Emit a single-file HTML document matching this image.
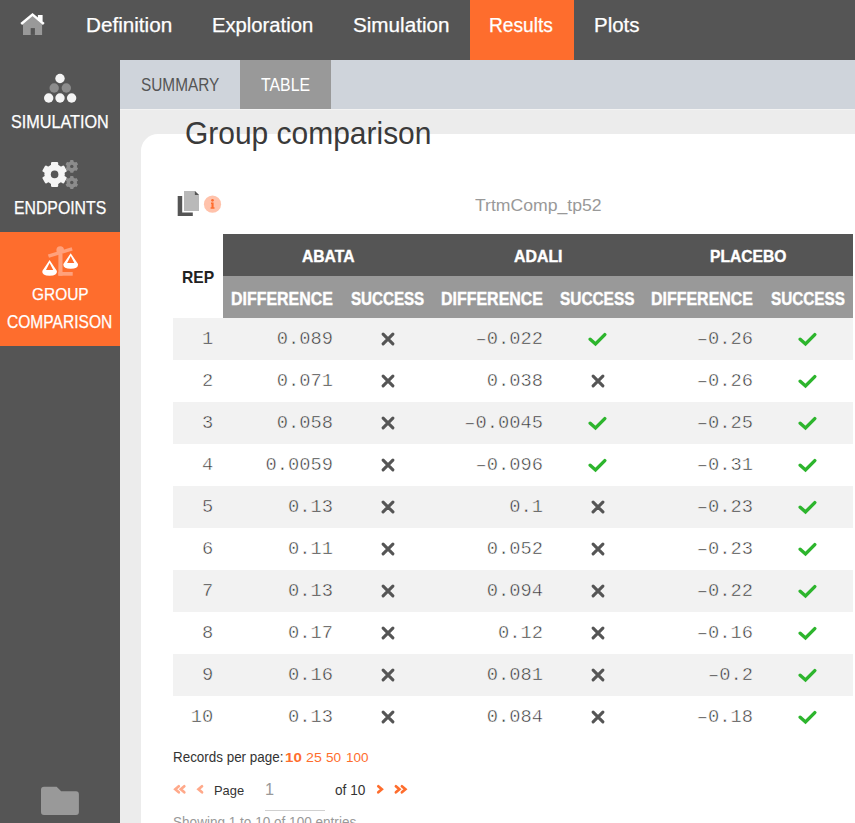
<!DOCTYPE html>
<html><head><meta charset="utf-8">
<style>
*{box-sizing:border-box;margin:0;padding:0}
html,body{width:855px;height:823px;overflow:hidden;background:#ececec;font-family:"Liberation Sans",sans-serif;color:#333;position:relative}
.bg{position:absolute}
.t{position:absolute;white-space:nowrap;line-height:1;transform-origin:0 0;font-family:"Liberation Sans",sans-serif}
.n{position:absolute;white-space:nowrap;line-height:1;text-align:right;font-family:"Liberation Mono",monospace;font-size:18.75px;color:#333;transform:scaleY(0.9313);transform-origin:0 77%}
.ic{position:absolute;display:block}
</style></head><body>
<div class="bg" style="left:0;top:0;width:855px;height:60px;background:#555"></div>
<div class="bg" style="left:470px;top:0;width:104px;height:60px;background:#fe6d2d"></div>
<div class="bg" style="left:0;top:60px;width:120px;height:763px;background:#555"></div>
<div class="bg" style="left:0;top:232px;width:120px;height:114px;background:#fe6d2d"></div>
<div class="bg" style="left:120px;top:60px;width:735px;height:49px;background:#cfd4db"></div>
<div class="bg" style="left:240px;top:60px;width:91px;height:49px;background:#999"></div>
<div class="bg" style="left:120px;top:109px;width:735px;height:1px;background:#f3f3f3"></div>
<div class="bg" style="left:141px;top:134px;width:760px;height:760px;background:#fff;border-radius:17px"></div>
<div class="bg" style="left:223px;top:234px;width:630px;height:42px;background:#555"></div>
<div class="bg" style="left:223px;top:276px;width:630px;height:42px;background:#999"></div>
<div class="bg" style="left:265px;top:810px;width:60px;height:1px;background:#d0d0d0"></div>

<!-- home -->
<svg class="ic" style="left:15px;top:8px" width="40" height="32" viewBox="15 8 40 32">
  <path d="M23 24 L32.5 16 L42.1 24 V34.9 H23 Z" fill="#999"/>
  <rect x="30.7" y="28.1" width="4.2" height="6.8" fill="#555"/>
  <rect x="37.9" y="15" width="4.7" height="6" fill="#fff"/>
  <path d="M21.2 24 L32.5 14.6 L43.8 24" fill="none" stroke="#fff" stroke-width="2.6" stroke-linecap="butt"/>
</svg>
<!-- simulation dots -->
<svg class="ic" style="left:35px;top:65px" width="50" height="40" viewBox="35 65 50 40">
  <circle cx="60" cy="78.5" r="4.7" fill="#f4f4f4"/>
  <circle cx="54.2" cy="88" r="4.7" fill="#8c8c8c"/>
  <circle cx="66.3" cy="88" r="4.7" fill="#8c8c8c"/>
  <circle cx="48.7" cy="98" r="4.7" fill="#f4f4f4"/>
  <circle cx="60" cy="98" r="4.7" fill="#f4f4f4"/>
  <circle cx="71.6" cy="98" r="4.7" fill="#f4f4f4"/>
</svg>
<!-- gears -->
<svg class="ic" style="left:35px;top:150px" width="50" height="45" viewBox="35 150 50 45">
  <circle cx="54.6" cy="174.4" r="10.2" fill="#f4f4f4"/>
  <rect x="51.00" y="161.90" width="7.20" height="12.50" rx="1.2" fill="#f4f4f4" transform="rotate(0.0 54.6 174.4)"/>
  <rect x="51.00" y="161.90" width="7.20" height="12.50" rx="1.2" fill="#f4f4f4" transform="rotate(60.0 54.6 174.4)"/>
  <rect x="51.00" y="161.90" width="7.20" height="12.50" rx="1.2" fill="#f4f4f4" transform="rotate(120.0 54.6 174.4)"/>
  <rect x="51.00" y="161.90" width="7.20" height="12.50" rx="1.2" fill="#f4f4f4" transform="rotate(180.0 54.6 174.4)"/>
  <rect x="51.00" y="161.90" width="7.20" height="12.50" rx="1.2" fill="#f4f4f4" transform="rotate(240.0 54.6 174.4)"/>
  <rect x="51.00" y="161.90" width="7.20" height="12.50" rx="1.2" fill="#f4f4f4" transform="rotate(300.0 54.6 174.4)"/>
  <circle cx="54.6" cy="174.4" r="3.8" fill="#555"/>
  <circle cx="71.8" cy="166.4" r="5.2" fill="#8c8c8c"/>
  <rect x="70.10" y="160.00" width="3.40" height="6.40" rx="0.7" fill="#8c8c8c" transform="rotate(0.0 71.8 166.4)"/>
  <rect x="70.10" y="160.00" width="3.40" height="6.40" rx="0.7" fill="#8c8c8c" transform="rotate(60.0 71.8 166.4)"/>
  <rect x="70.10" y="160.00" width="3.40" height="6.40" rx="0.7" fill="#8c8c8c" transform="rotate(120.0 71.8 166.4)"/>
  <rect x="70.10" y="160.00" width="3.40" height="6.40" rx="0.7" fill="#8c8c8c" transform="rotate(180.0 71.8 166.4)"/>
  <rect x="70.10" y="160.00" width="3.40" height="6.40" rx="0.7" fill="#8c8c8c" transform="rotate(240.0 71.8 166.4)"/>
  <rect x="70.10" y="160.00" width="3.40" height="6.40" rx="0.7" fill="#8c8c8c" transform="rotate(300.0 71.8 166.4)"/>
  <circle cx="71.8" cy="166.4" r="1.7" fill="#555"/>
  <circle cx="71.8" cy="182.5" r="5.2" fill="#8c8c8c"/>
  <rect x="70.10" y="176.10" width="3.40" height="6.40" rx="0.7" fill="#8c8c8c" transform="rotate(0.0 71.8 182.5)"/>
  <rect x="70.10" y="176.10" width="3.40" height="6.40" rx="0.7" fill="#8c8c8c" transform="rotate(60.0 71.8 182.5)"/>
  <rect x="70.10" y="176.10" width="3.40" height="6.40" rx="0.7" fill="#8c8c8c" transform="rotate(120.0 71.8 182.5)"/>
  <rect x="70.10" y="176.10" width="3.40" height="6.40" rx="0.7" fill="#8c8c8c" transform="rotate(180.0 71.8 182.5)"/>
  <rect x="70.10" y="176.10" width="3.40" height="6.40" rx="0.7" fill="#8c8c8c" transform="rotate(240.0 71.8 182.5)"/>
  <rect x="70.10" y="176.10" width="3.40" height="6.40" rx="0.7" fill="#8c8c8c" transform="rotate(300.0 71.8 182.5)"/>
  <circle cx="71.8" cy="182.5" r="1.7" fill="#555"/>
</svg>
<!-- scales -->
<svg class="ic" style="left:35px;top:240px" width="50" height="45" viewBox="35 240 50 45">
  <g fill="#ffa17c">
    <path d="M47.9 254.6 L71.6 247.3 L72.7 250.5 L49 257.8 Z"/>
    <circle cx="60.2" cy="250" r="3.8"/>
    <rect x="58.4" y="254" width="4.1" height="21.7"/>
    <rect x="58.4" y="272" width="14.3" height="3.7"/>
  </g>
  <g fill="#fff">
    <path fill-rule="evenodd" d="M49.6 260 L56.9 271 Q57.5 275.7 49.6 275.7 Q41.7 275.7 42.3 271 Z M49.6 262.9 L46 270 H53.2 Z"/>
    <path fill-rule="evenodd" d="M70.7 253.2 L78 264 Q78.6 268.7 70.7 268.7 Q62.8 268.7 63.4 264 Z M70.7 256.1 L67.1 263 H74.3 Z"/>
  </g>
</svg>
<!-- folder -->
<svg class="ic" style="left:35px;top:780px" width="50" height="40" viewBox="35 780 50 40">
  <path d="M44 786.8 H56.6 L61.2 791.3 H76 Q78.9 791.3 78.9 794.3 V812 Q78.9 815 76 815 H44 Q41 815 41 812 V789.8 Q41 786.8 44 786.8 Z" fill="#999"/>
</svg>
<!-- copy + info -->
<svg class="ic" style="left:170px;top:185px" width="60" height="35" viewBox="170 185 60 35">
  <path d="M177.7 196 H182.2 V212.5 H192.8 V216 H177.7 Z" fill="#555"/>
  <path d="M183.5 190.5 H194.5 L199.3 195.3 V211.3 H183.5 Z" fill="#fff"/>
  <path d="M184 190.9 H195 L199 194.9 V211 H184 Z" fill="#b9b9b9"/>
  <path d="M194.9 190.9 L199 195 H194.9 Z" fill="#555"/>
  <circle cx="212.5" cy="204.2" r="8.6" fill="#ffc2ab"/>
  <circle cx="212.5" cy="200.3" r="1.35" fill="#ff6d2e"/>
  <path d="M211 202.4 H213.6 V207.2 H214.5 V208.7 H210.6 V207.2 H211.5 V203.9 H211 Z" fill="#ff6d2e"/>
</svg>
<!-- pagination chevrons -->
<svg class="ic" style="left:170px;top:780px" width="240" height="20" viewBox="170 780 240 20">
  <g fill="none" stroke="#ffa98a" stroke-width="2.7" stroke-linecap="round" stroke-linejoin="miter">
    <path d="M178.8 786.3 L175.3 789.3 L178.8 792.3"/>
    <path d="M184.3 786.3 L180.8 789.3 L184.3 792.3"/>
    <path d="M202 786.3 L198.5 789.3 L202 792.3"/>
  </g>
  <g fill="none" stroke="#fe6d2d" stroke-width="2.7" stroke-linecap="round" stroke-linejoin="miter">
    <path d="M378.3 786.3 L381.8 789.3 L378.3 792.3"/>
    <path d="M395.9 786.3 L399.4 789.3 L395.9 792.3"/>
    <path d="M401.9 786.3 L405.4 789.3 L401.9 792.3"/>
  </g>
</svg>
<div class="bg" style="left:173px;top:318px;width:680px;height:42px;background:#f2f2f2"></div>
<div class="bg" style="left:173px;top:402px;width:680px;height:42px;background:#f2f2f2"></div>
<div class="bg" style="left:173px;top:486px;width:680px;height:42px;background:#f2f2f2"></div>
<div class="bg" style="left:173px;top:570px;width:680px;height:42px;background:#f2f2f2"></div>
<div class="bg" style="left:173px;top:654px;width:680px;height:42px;background:#f2f2f2"></div>
<div class="n" style="left:13.300000000000011px;top:329.76px;width:200px;-webkit-text-stroke:0.5px #f2f2f2">1</div>
<div class="n" style="left:133.0px;top:329.76px;width:200px;-webkit-text-stroke:0.5px #f2f2f2">0.089</div>
<svg class="ic" style="left:379.8px;top:331.2px" width="16" height="16" viewBox="0 0 16 16"><path d="M3.1 3.1L12.9 12.9M12.9 3.1L3.1 12.9" stroke="#555" stroke-width="3.1" stroke-linecap="round"/></svg>
<div class="n" style="left:343.0px;top:329.76px;width:200px;-webkit-text-stroke:0.5px #f2f2f2">–0.022</div>
<svg class="ic" style="left:587.8px;top:331.2px" width="22" height="16" viewBox="0 0 22 16"><path d="M2.2 8.2L7.5 12.9L16.8 3.6" fill="none" stroke="#2db52d" stroke-width="3.4" stroke-linecap="round"/></svg>
<div class="n" style="left:553.0px;top:329.76px;width:200px;-webkit-text-stroke:0.5px #f2f2f2">–0.26</div>
<svg class="ic" style="left:797.8px;top:331.2px" width="22" height="16" viewBox="0 0 22 16"><path d="M2.2 8.2L7.5 12.9L16.8 3.6" fill="none" stroke="#2db52d" stroke-width="3.4" stroke-linecap="round"/></svg>
<div class="n" style="left:13.300000000000011px;top:371.76px;width:200px;-webkit-text-stroke:0.5px #ffffff">2</div>
<div class="n" style="left:133.0px;top:371.76px;width:200px;-webkit-text-stroke:0.5px #ffffff">0.071</div>
<svg class="ic" style="left:379.8px;top:373.2px" width="16" height="16" viewBox="0 0 16 16"><path d="M3.1 3.1L12.9 12.9M12.9 3.1L3.1 12.9" stroke="#555" stroke-width="3.1" stroke-linecap="round"/></svg>
<div class="n" style="left:343.0px;top:371.76px;width:200px;-webkit-text-stroke:0.5px #ffffff">0.038</div>
<svg class="ic" style="left:589.8px;top:373.2px" width="16" height="16" viewBox="0 0 16 16"><path d="M3.1 3.1L12.9 12.9M12.9 3.1L3.1 12.9" stroke="#555" stroke-width="3.1" stroke-linecap="round"/></svg>
<div class="n" style="left:553.0px;top:371.76px;width:200px;-webkit-text-stroke:0.5px #ffffff">–0.26</div>
<svg class="ic" style="left:797.8px;top:373.2px" width="22" height="16" viewBox="0 0 22 16"><path d="M2.2 8.2L7.5 12.9L16.8 3.6" fill="none" stroke="#2db52d" stroke-width="3.4" stroke-linecap="round"/></svg>
<div class="n" style="left:13.300000000000011px;top:413.76px;width:200px;-webkit-text-stroke:0.5px #f2f2f2">3</div>
<div class="n" style="left:133.0px;top:413.76px;width:200px;-webkit-text-stroke:0.5px #f2f2f2">0.058</div>
<svg class="ic" style="left:379.8px;top:415.2px" width="16" height="16" viewBox="0 0 16 16"><path d="M3.1 3.1L12.9 12.9M12.9 3.1L3.1 12.9" stroke="#555" stroke-width="3.1" stroke-linecap="round"/></svg>
<div class="n" style="left:343.0px;top:413.76px;width:200px;-webkit-text-stroke:0.5px #f2f2f2">–0.0045</div>
<svg class="ic" style="left:587.8px;top:415.2px" width="22" height="16" viewBox="0 0 22 16"><path d="M2.2 8.2L7.5 12.9L16.8 3.6" fill="none" stroke="#2db52d" stroke-width="3.4" stroke-linecap="round"/></svg>
<div class="n" style="left:553.0px;top:413.76px;width:200px;-webkit-text-stroke:0.5px #f2f2f2">–0.25</div>
<svg class="ic" style="left:797.8px;top:415.2px" width="22" height="16" viewBox="0 0 22 16"><path d="M2.2 8.2L7.5 12.9L16.8 3.6" fill="none" stroke="#2db52d" stroke-width="3.4" stroke-linecap="round"/></svg>
<div class="n" style="left:13.300000000000011px;top:455.76px;width:200px;-webkit-text-stroke:0.5px #ffffff">4</div>
<div class="n" style="left:133.0px;top:455.76px;width:200px;-webkit-text-stroke:0.5px #ffffff">0.0059</div>
<svg class="ic" style="left:379.8px;top:457.2px" width="16" height="16" viewBox="0 0 16 16"><path d="M3.1 3.1L12.9 12.9M12.9 3.1L3.1 12.9" stroke="#555" stroke-width="3.1" stroke-linecap="round"/></svg>
<div class="n" style="left:343.0px;top:455.76px;width:200px;-webkit-text-stroke:0.5px #ffffff">–0.096</div>
<svg class="ic" style="left:587.8px;top:457.2px" width="22" height="16" viewBox="0 0 22 16"><path d="M2.2 8.2L7.5 12.9L16.8 3.6" fill="none" stroke="#2db52d" stroke-width="3.4" stroke-linecap="round"/></svg>
<div class="n" style="left:553.0px;top:455.76px;width:200px;-webkit-text-stroke:0.5px #ffffff">–0.31</div>
<svg class="ic" style="left:797.8px;top:457.2px" width="22" height="16" viewBox="0 0 22 16"><path d="M2.2 8.2L7.5 12.9L16.8 3.6" fill="none" stroke="#2db52d" stroke-width="3.4" stroke-linecap="round"/></svg>
<div class="n" style="left:13.300000000000011px;top:497.76px;width:200px;-webkit-text-stroke:0.5px #f2f2f2">5</div>
<div class="n" style="left:133.0px;top:497.76px;width:200px;-webkit-text-stroke:0.5px #f2f2f2">0.13</div>
<svg class="ic" style="left:379.8px;top:499.2px" width="16" height="16" viewBox="0 0 16 16"><path d="M3.1 3.1L12.9 12.9M12.9 3.1L3.1 12.9" stroke="#555" stroke-width="3.1" stroke-linecap="round"/></svg>
<div class="n" style="left:343.0px;top:497.76px;width:200px;-webkit-text-stroke:0.5px #f2f2f2">0.1</div>
<svg class="ic" style="left:589.8px;top:499.2px" width="16" height="16" viewBox="0 0 16 16"><path d="M3.1 3.1L12.9 12.9M12.9 3.1L3.1 12.9" stroke="#555" stroke-width="3.1" stroke-linecap="round"/></svg>
<div class="n" style="left:553.0px;top:497.76px;width:200px;-webkit-text-stroke:0.5px #f2f2f2">–0.23</div>
<svg class="ic" style="left:797.8px;top:499.2px" width="22" height="16" viewBox="0 0 22 16"><path d="M2.2 8.2L7.5 12.9L16.8 3.6" fill="none" stroke="#2db52d" stroke-width="3.4" stroke-linecap="round"/></svg>
<div class="n" style="left:13.300000000000011px;top:539.76px;width:200px;-webkit-text-stroke:0.5px #ffffff">6</div>
<div class="n" style="left:133.0px;top:539.76px;width:200px;-webkit-text-stroke:0.5px #ffffff">0.11</div>
<svg class="ic" style="left:379.8px;top:541.2px" width="16" height="16" viewBox="0 0 16 16"><path d="M3.1 3.1L12.9 12.9M12.9 3.1L3.1 12.9" stroke="#555" stroke-width="3.1" stroke-linecap="round"/></svg>
<div class="n" style="left:343.0px;top:539.76px;width:200px;-webkit-text-stroke:0.5px #ffffff">0.052</div>
<svg class="ic" style="left:589.8px;top:541.2px" width="16" height="16" viewBox="0 0 16 16"><path d="M3.1 3.1L12.9 12.9M12.9 3.1L3.1 12.9" stroke="#555" stroke-width="3.1" stroke-linecap="round"/></svg>
<div class="n" style="left:553.0px;top:539.76px;width:200px;-webkit-text-stroke:0.5px #ffffff">–0.23</div>
<svg class="ic" style="left:797.8px;top:541.2px" width="22" height="16" viewBox="0 0 22 16"><path d="M2.2 8.2L7.5 12.9L16.8 3.6" fill="none" stroke="#2db52d" stroke-width="3.4" stroke-linecap="round"/></svg>
<div class="n" style="left:13.300000000000011px;top:581.76px;width:200px;-webkit-text-stroke:0.5px #f2f2f2">7</div>
<div class="n" style="left:133.0px;top:581.76px;width:200px;-webkit-text-stroke:0.5px #f2f2f2">0.13</div>
<svg class="ic" style="left:379.8px;top:583.2px" width="16" height="16" viewBox="0 0 16 16"><path d="M3.1 3.1L12.9 12.9M12.9 3.1L3.1 12.9" stroke="#555" stroke-width="3.1" stroke-linecap="round"/></svg>
<div class="n" style="left:343.0px;top:581.76px;width:200px;-webkit-text-stroke:0.5px #f2f2f2">0.094</div>
<svg class="ic" style="left:589.8px;top:583.2px" width="16" height="16" viewBox="0 0 16 16"><path d="M3.1 3.1L12.9 12.9M12.9 3.1L3.1 12.9" stroke="#555" stroke-width="3.1" stroke-linecap="round"/></svg>
<div class="n" style="left:553.0px;top:581.76px;width:200px;-webkit-text-stroke:0.5px #f2f2f2">–0.22</div>
<svg class="ic" style="left:797.8px;top:583.2px" width="22" height="16" viewBox="0 0 22 16"><path d="M2.2 8.2L7.5 12.9L16.8 3.6" fill="none" stroke="#2db52d" stroke-width="3.4" stroke-linecap="round"/></svg>
<div class="n" style="left:13.300000000000011px;top:623.76px;width:200px;-webkit-text-stroke:0.5px #ffffff">8</div>
<div class="n" style="left:133.0px;top:623.76px;width:200px;-webkit-text-stroke:0.5px #ffffff">0.17</div>
<svg class="ic" style="left:379.8px;top:625.2px" width="16" height="16" viewBox="0 0 16 16"><path d="M3.1 3.1L12.9 12.9M12.9 3.1L3.1 12.9" stroke="#555" stroke-width="3.1" stroke-linecap="round"/></svg>
<div class="n" style="left:343.0px;top:623.76px;width:200px;-webkit-text-stroke:0.5px #ffffff">0.12</div>
<svg class="ic" style="left:589.8px;top:625.2px" width="16" height="16" viewBox="0 0 16 16"><path d="M3.1 3.1L12.9 12.9M12.9 3.1L3.1 12.9" stroke="#555" stroke-width="3.1" stroke-linecap="round"/></svg>
<div class="n" style="left:553.0px;top:623.76px;width:200px;-webkit-text-stroke:0.5px #ffffff">–0.16</div>
<svg class="ic" style="left:797.8px;top:625.2px" width="22" height="16" viewBox="0 0 22 16"><path d="M2.2 8.2L7.5 12.9L16.8 3.6" fill="none" stroke="#2db52d" stroke-width="3.4" stroke-linecap="round"/></svg>
<div class="n" style="left:13.300000000000011px;top:665.76px;width:200px;-webkit-text-stroke:0.5px #f2f2f2">9</div>
<div class="n" style="left:133.0px;top:665.76px;width:200px;-webkit-text-stroke:0.5px #f2f2f2">0.16</div>
<svg class="ic" style="left:379.8px;top:667.2px" width="16" height="16" viewBox="0 0 16 16"><path d="M3.1 3.1L12.9 12.9M12.9 3.1L3.1 12.9" stroke="#555" stroke-width="3.1" stroke-linecap="round"/></svg>
<div class="n" style="left:343.0px;top:665.76px;width:200px;-webkit-text-stroke:0.5px #f2f2f2">0.081</div>
<svg class="ic" style="left:589.8px;top:667.2px" width="16" height="16" viewBox="0 0 16 16"><path d="M3.1 3.1L12.9 12.9M12.9 3.1L3.1 12.9" stroke="#555" stroke-width="3.1" stroke-linecap="round"/></svg>
<div class="n" style="left:553.0px;top:665.76px;width:200px;-webkit-text-stroke:0.5px #f2f2f2">–0.2</div>
<svg class="ic" style="left:797.8px;top:667.2px" width="22" height="16" viewBox="0 0 22 16"><path d="M2.2 8.2L7.5 12.9L16.8 3.6" fill="none" stroke="#2db52d" stroke-width="3.4" stroke-linecap="round"/></svg>
<div class="n" style="left:13.300000000000011px;top:707.76px;width:200px;-webkit-text-stroke:0.5px #ffffff">10</div>
<div class="n" style="left:133.0px;top:707.76px;width:200px;-webkit-text-stroke:0.5px #ffffff">0.13</div>
<svg class="ic" style="left:379.8px;top:709.2px" width="16" height="16" viewBox="0 0 16 16"><path d="M3.1 3.1L12.9 12.9M12.9 3.1L3.1 12.9" stroke="#555" stroke-width="3.1" stroke-linecap="round"/></svg>
<div class="n" style="left:343.0px;top:707.76px;width:200px;-webkit-text-stroke:0.5px #ffffff">0.084</div>
<svg class="ic" style="left:589.8px;top:709.2px" width="16" height="16" viewBox="0 0 16 16"><path d="M3.1 3.1L12.9 12.9M12.9 3.1L3.1 12.9" stroke="#555" stroke-width="3.1" stroke-linecap="round"/></svg>
<div class="n" style="left:553.0px;top:707.76px;width:200px;-webkit-text-stroke:0.5px #ffffff">–0.18</div>
<svg class="ic" style="left:797.8px;top:709.2px" width="22" height="16" viewBox="0 0 22 16"><path d="M2.2 8.2L7.5 12.9L16.8 3.6" fill="none" stroke="#2db52d" stroke-width="3.4" stroke-linecap="round"/></svg>
<div class="t" style="left:85.64px;top:15.94px;font-size:19.71px;color:#fff;font-weight:normal;transform:scaleX(1.0500);-webkit-text-stroke:0.25px #fff">Definition</div>
<div class="t" style="left:211.58px;top:15.94px;font-size:19.71px;color:#fff;font-weight:normal;transform:scaleX(1.0272);-webkit-text-stroke:0.25px #fff">Exploration</div>
<div class="t" style="left:353.27px;top:15.94px;font-size:19.71px;color:#fff;font-weight:normal;transform:scaleX(1.0492);-webkit-text-stroke:0.25px #fff">Simulation</div>
<div class="t" style="left:489.26px;top:15.94px;font-size:19.71px;color:#fff;font-weight:normal;transform:scaleX(0.9737);-webkit-text-stroke:0.25px #fff">Results</div>
<div class="t" style="left:593.56px;top:15.94px;font-size:19.71px;color:#fff;font-weight:normal;transform:scaleX(1.0388);-webkit-text-stroke:0.25px #fff">Plots</div>
<div class="t" style="left:11.37px;top:114.06px;font-size:17.68px;color:#fff;font-weight:normal;transform:scaleX(0.9168);-webkit-text-stroke:0.25px #fff">SIMULATION</div>
<div class="t" style="left:14.03px;top:199.56px;font-size:17.68px;color:#fff;font-weight:normal;transform:scaleX(0.8944);-webkit-text-stroke:0.25px #fff">ENDPOINTS</div>
<div class="t" style="left:31.53px;top:285.93px;font-size:17.25px;color:#fff;font-weight:normal;transform:scaleX(0.8946);-webkit-text-stroke:0.25px #fff">GROUP</div>
<div class="t" style="left:7.42px;top:314.26px;font-size:17.68px;color:#fff;font-weight:normal;transform:scaleX(0.8812);-webkit-text-stroke:0.25px #fff">COMPARISON</div>
<div class="t" style="left:141.01px;top:76.66px;font-size:17.68px;color:#555;font-weight:normal;transform:scaleX(0.8700);">SUMMARY</div>
<div class="t" style="left:261.20px;top:76.56px;font-size:17.68px;color:#fff;font-weight:normal;transform:scaleX(0.8974);">TABLE</div>
<div class="t" style="left:184.50px;top:118.64px;font-size:30.72px;color:#3a3a3a;font-weight:normal;transform:scaleX(0.9752);">Group comparison</div>
<div class="t" style="left:474.76px;top:196.73px;font-size:17.25px;color:#999;font-weight:normal;transform:scaleX(1.0210);">TrtmComp_tp52</div>
<div class="t" style="left:181.98px;top:270.12px;font-size:16.67px;color:#222;font-weight:bold;transform:scaleX(0.9391);">REP</div>
<div class="t" style="left:301.81px;top:248.25px;font-size:17.10px;color:#fff;font-weight:bold;transform:scaleX(0.9161);-webkit-text-stroke:0.4px #fff">ABATA</div>
<div class="t" style="left:513.90px;top:248.25px;font-size:17.10px;color:#fff;font-weight:bold;transform:scaleX(0.9289);-webkit-text-stroke:0.4px #fff">ADALI</div>
<div class="t" style="left:709.98px;top:248.25px;font-size:17.10px;color:#fff;font-weight:bold;transform:scaleX(0.9138);-webkit-text-stroke:0.4px #fff">PLACEBO</div>
<div class="t" style="left:231.46px;top:290.56px;font-size:17.68px;color:#fff;font-weight:bold;transform:scaleX(0.9017);-webkit-text-stroke:0.4px #fff">DIFFERENCE</div>
<div class="t" style="left:441.46px;top:290.56px;font-size:17.68px;color:#fff;font-weight:bold;transform:scaleX(0.9035);-webkit-text-stroke:0.4px #fff">DIFFERENCE</div>
<div class="t" style="left:651.36px;top:290.56px;font-size:17.68px;color:#fff;font-weight:bold;transform:scaleX(0.9035);-webkit-text-stroke:0.4px #fff">DIFFERENCE</div>
<div class="t" style="left:351.05px;top:290.56px;font-size:17.68px;color:#fff;font-weight:bold;transform:scaleX(0.8570);-webkit-text-stroke:0.4px #fff">SUCCESS</div>
<div class="t" style="left:560.14px;top:290.56px;font-size:17.68px;color:#fff;font-weight:bold;transform:scaleX(0.8712);-webkit-text-stroke:0.4px #fff">SUCCESS</div>
<div class="t" style="left:770.54px;top:290.56px;font-size:17.68px;color:#fff;font-weight:bold;transform:scaleX(0.8641);-webkit-text-stroke:0.4px #fff">SUCCESS</div>
<div class="t" style="left:172.73px;top:750.97px;font-size:13.77px;color:#333;font-weight:normal;transform:scaleX(0.9747);">Records per page:</div>
<div class="t" style="left:285.02px;top:751.28px;font-size:13.04px;color:#fe6d2d;font-weight:bold;transform:scaleX(1.1595);">10</div>
<div class="t" style="left:305.59px;top:751.28px;font-size:13.04px;color:#fe6d2d;font-weight:normal;transform:scaleX(1.0899);">25</div>
<div class="t" style="left:326.06px;top:751.28px;font-size:13.04px;color:#fe6d2d;font-weight:normal;transform:scaleX(1.0444);">50</div>
<div class="t" style="left:345.79px;top:751.28px;font-size:13.04px;color:#fe6d2d;font-weight:normal;transform:scaleX(1.0354);">100</div>
<div class="t" style="left:213.97px;top:783.59px;font-size:13.62px;color:#333;font-weight:normal;transform:scaleX(0.9466);">Page</div>
<div class="t" style="left:264.78px;top:782.44px;font-size:16.52px;color:#999;font-weight:normal;transform:scaleX(0.9853);">1</div>
<div class="t" style="left:335.35px;top:784.27px;font-size:13.77px;color:#333;font-weight:normal;transform:scaleX(0.9921);">of 10</div>
<div class="t" style="left:172.79px;top:815.57px;font-size:13.77px;color:#999;font-weight:normal;transform:scaleX(0.9852);">Showing 1 to 10 of 100 entries</div>
</body></html>
